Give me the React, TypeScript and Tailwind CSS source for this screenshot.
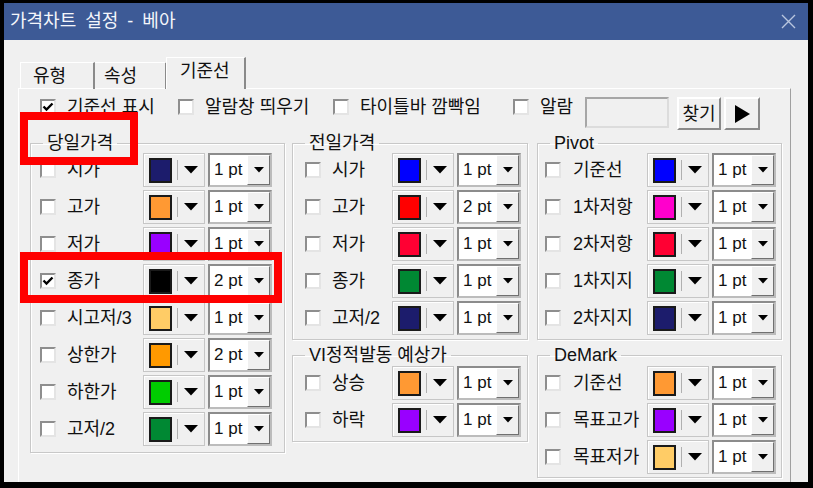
import React from "react";

type Line = { label: string; color: string; pt: number; on?: boolean };
type Cols = { pad: string; label: string };

const FONT = "font-['Liberation_Sans','Noto_Sans_CJK_KR',sans-serif]";

const todayLines: Line[] = [
  { label: "시가", color: "#1c1c6c", pt: 1 },
  { label: "고가", color: "#ff9933", pt: 1 },
  { label: "저가", color: "#9900ff", pt: 1 },
  { label: "종가", color: "#000000", pt: 2, on: true },
  { label: "시고저/3", color: "#ffcc66", pt: 1 },
  { label: "상한가", color: "#ff9900", pt: 2 },
  { label: "하한가", color: "#00cc00", pt: 1 },
  { label: "고저/2", color: "#008833", pt: 1 },
];

const prevLines: Line[] = [
  { label: "시가", color: "#0000ff", pt: 1 },
  { label: "고가", color: "#ff0000", pt: 2 },
  { label: "저가", color: "#ff0033", pt: 1 },
  { label: "종가", color: "#008833", pt: 1 },
  { label: "고저/2", color: "#1c1c6c", pt: 1 },
];

const viLines: Line[] = [
  { label: "상승", color: "#ff9933", pt: 1 },
  { label: "하락", color: "#9900ff", pt: 1 },
];

const pivotLines: Line[] = [
  { label: "기준선", color: "#0000ff", pt: 1 },
  { label: "1차저항", color: "#ff00cc", pt: 1 },
  { label: "2차저항", color: "#ff0033", pt: 1 },
  { label: "1차지지", color: "#008833", pt: 1 },
  { label: "2차지지", color: "#1c1c6c", pt: 1 },
];

const demarkLines: Line[] = [
  { label: "기준선", color: "#ff9933", pt: 1 },
  { label: "목표고가", color: "#9900ff", pt: 1 },
  { label: "목표저가", color: "#ffcc66", pt: 1 },
];

const leftCols: Cols = { pad: "pl-[9px]", label: "ml-[11px] w-[76px]" };
const midCols: Cols = { pad: "pl-[12px]", label: "ml-[11px] w-[60px]" };
const rightCols: Cols = { pad: "pl-[7px]", label: "ml-[12px] w-[74px]" };

function Check({ on }: { on?: boolean }) {
  return (
    <span className="flex h-4 w-4 shrink-0 items-center justify-center border-2 border-t-[#8e8e8e] border-l-[#8e8e8e] border-r-[#e4e4e4] border-b-[#e4e4e4] bg-white">
      {on && (
        <svg width="12" height="10" viewBox="0 0 12 10">
          <path d="M1.5 4.5L4.5 7.5L10.5 1.5" fill="none" stroke="#000" strokeWidth="2.4" />
        </svg>
      )}
    </span>
  );
}

function ColorCombo({ color }: { color: string }) {
  return (
    <div className="flex h-[34px] w-[62px] shrink-0 items-center border border-[#c6c6c6] bg-[#f0f0f0] shadow-[inset_1px_1px_0_#fff]">
      <span className="ml-[5px] h-[25px] w-[23px] border-2 border-[#1a1a1a]" style={{ backgroundColor: color }} />
      <span className="ml-[5px] h-[20px] w-px bg-[#b0b0b0]" />
      <svg className="ml-[6px]" width="14" height="8" viewBox="0 0 14 8">
        <path d="M0 0H14L7 7.5Z" fill="#000" />
      </svg>
    </div>
  );
}

function PtCombo({ pt }: { pt: number }) {
  return (
    <div className="ml-[3px] flex h-[34px] w-[64px] shrink-0 border-2 border-t-[#8c8c8c] border-l-[#8c8c8c] border-r-[#bcbcbc] border-b-[#bcbcbc] bg-white">
      <span className="flex-1 pl-[4px] text-[17px] leading-[30px] whitespace-nowrap">{pt} pt</span>
      <span className="flex w-[23px] items-center justify-center border border-t-white border-l-white border-r-[#707070] border-b-[#707070] bg-[#f0f0f0]">
        <svg width="10" height="6" viewBox="0 0 10 6">
          <path d="M0 0H10L5 5.5Z" fill="#000" />
        </svg>
      </span>
    </div>
  );
}

function Row({ line, cols }: { line: Line; cols: Cols }) {
  return (
    <div className={`flex h-[34px] items-center ${cols.pad}`}>
      <Check on={line.on} />
      <span className={`${cols.label} shrink-0 whitespace-nowrap text-[18px] leading-[22px]`}>{line.label}</span>
      <ColorCombo color={line.color} />
      <PtCombo pt={line.pt} />
    </div>
  );
}

function Group({
  title,
  lines,
  cols,
  body,
}: {
  title: string;
  lines: Line[];
  cols: Cols;
  body: string;
}) {
  return (
    <fieldset className="border border-[#c8c8c8] shadow-[inset_1px_1px_0_#fff,1px_1px_0_#fff]">
      <legend className="ml-[12px] px-[4px] text-[18px] leading-[18px] whitespace-nowrap">{title}</legend>
      <div className={`flex flex-col gap-[3px] ${body}`}>
        {lines.map((l, i) => (
          <Row key={i} line={l} cols={cols} />
        ))}
      </div>
    </fieldset>
  );
}

function TopCheck({ label, on, w }: { label: string; on?: boolean; w: string }) {
  return (
    <div className={`flex h-[20px] shrink-0 items-center gap-[11px] ${w}`}>
      <Check on={on} />
      <span className="whitespace-nowrap text-[18px] leading-[20px]">{label}</span>
    </div>
  );
}

export default function App() {
  return (
    <div className={`relative h-[488px] w-[813px] overflow-hidden bg-black pt-[3px] pr-[5px] pb-[6px] pl-[4px] text-[#111] ${FONT}`}>
      <div className="flex h-full flex-col overflow-hidden bg-[#f0f0f0]">
        {/* title bar */}
        <div className="flex h-[37px] shrink-0 items-center justify-between bg-[#3d5a96] pl-[6px] pr-[12px]">
          <span className="text-[18px] text-[#f4f6fb] [word-spacing:4px]">가격차트 설정 - 베아</span>
          <svg width="15" height="15" viewBox="0 0 15 15">
            <path d="M1 1L14 14M14 1L1 14" stroke="#b9c6df" strokeWidth="1.4" />
          </svg>
        </div>

        <div className="flex flex-1 flex-col pt-[17px] pr-[17px] pl-[14px]">
          {/* tabs */}
          <div className="relative z-10 -mb-px flex h-[32px] items-end pl-[2px]">
            <div className="h-[27px] w-[75px] border-t border-l border-r-2 border-t-white border-l-white border-r-[#8a8a8a] pl-[12px] text-[18px] leading-[26px]">
              유형
            </div>
            <div className="h-[27px] w-[72px] border-t border-r-2 border-t-white border-r-[#8a8a8a] pl-[9px] text-[18px] leading-[26px]">
              속성
            </div>
            <div className="-ml-px h-[32px] w-[80px] border-t border-l border-r-2 border-t-white border-l-white border-r-[#8a8a8a] bg-[#f0f0f0] pt-[2px] pl-[13px] text-[18px] leading-[22px]">
              기준선
            </div>
          </div>

          {/* tab panel */}
          <div className="flex h-[400px] shrink-0 flex-col border border-t-white border-l-white border-r-[#a0a0a0] border-b-[#a0a0a0] pt-[8px] pl-[21px]">
            <div className="flex h-[33px] items-start">
              <TopCheck label="기준선 표시" on w="w-[138px]" />
              <TopCheck label="알람창 띄우기" w="w-[155px]" />
              <TopCheck label="타이틀바 깜빡임" w="w-[180px]" />
              <TopCheck label="알람" w="w-[72px]" />
              <div className="h-[31px] w-[84px] border-2 border-t-[#a6a6a6] border-l-[#a6a6a6] border-r-[#dcdcdc] border-b-[#dcdcdc] bg-[#f0f0f0]" />
              <button className="ml-[8px] h-[33px] w-[44px] border-2 border-t-white border-l-white border-r-[#8a8a8a] border-b-[#8a8a8a] bg-[#f0f0f0] text-[18px] leading-[28px]">
                찾기
              </button>
              <button className="ml-[3px] flex h-[33px] w-[36px] items-center justify-center border-2 border-t-white border-l-white border-r-[#8a8a8a] border-b-[#8a8a8a] bg-[#f0f0f0]">
                <svg width="16" height="18" viewBox="0 0 16 18">
                  <path d="M1 0L16 9L1 18Z" fill="#000" />
                </svg>
              </button>
            </div>

            <div className="mt-[4px] -ml-[10px] flex items-start">
              <div className="w-[255px]">
                <Group title="당일가격" lines={todayLines} cols={leftCols} body="pt-[1px] pb-[6px]" />
              </div>
              <div className="ml-[7px] flex w-[236px] flex-col gap-[6px]">
                <Group title="전일가격" lines={prevLines} cols={midCols} body="pt-[1px] pb-[4px]" />
                <Group title="VI정적발동 예상가" lines={viLines} cols={midCols} body="pt-[2px] pb-[4px]" />
              </div>
              <div className="ml-[9px] flex w-[245px] flex-col gap-[6px]">
                <Group title="Pivot" lines={pivotLines} cols={rightCols} body="pt-[1px] pb-[4px]" />
                <Group title="DeMark" lines={demarkLines} cols={rightCols} body="pt-[2px] pb-[3px]" />
              </div>
            </div>
          </div>
        </div>
      </div>

      {/* red highlight frames */}
      <div className="absolute top-[112px] left-[20px] h-[53px] w-[118px] border-[8px] border-[#ff0000]" />
      <div className="absolute top-[252px] left-[20px] h-[51px] w-[262px] border-[8px] border-[#ff0000]" />
    </div>
  );
}
